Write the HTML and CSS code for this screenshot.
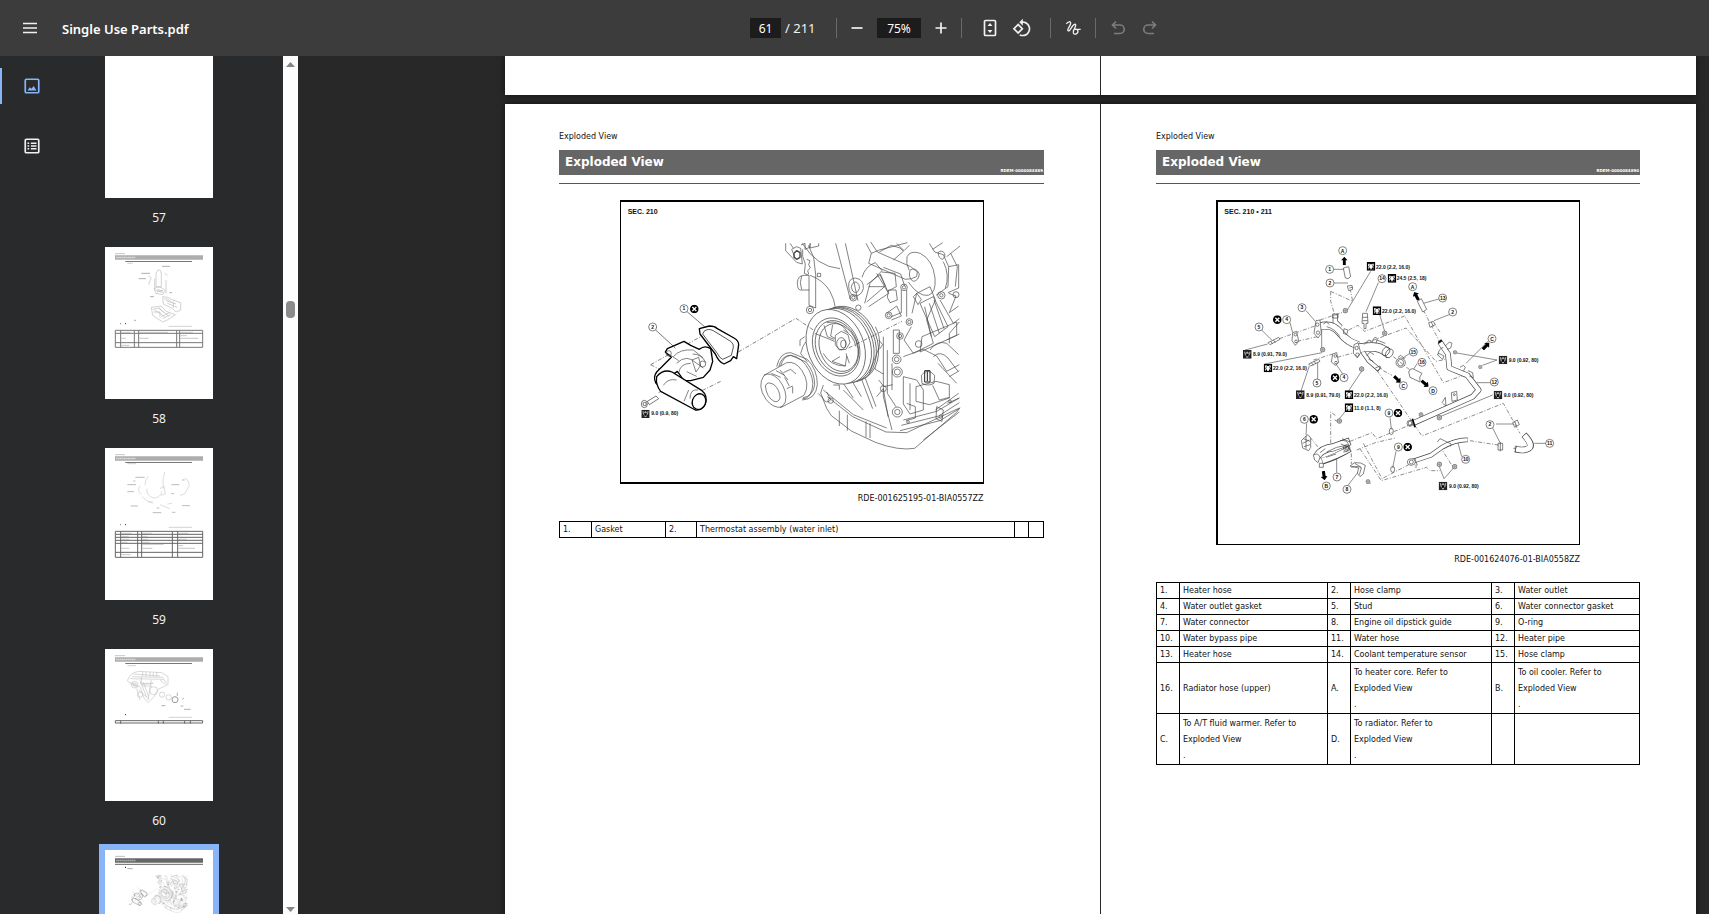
FILE: index.html
```html
<!DOCTYPE html>
<html lang="en">
<head>
<meta charset="utf-8">
<title>Single Use Parts.pdf</title>
<link rel="stylesheet" href="styles.css">
</head>
<body>
<svg class="defs" aria-hidden="true">
  <defs>
    <symbol id="noreuse" viewBox="0 0 26 26">
      <circle cx="13" cy="13" r="13" fill="#000"/>
      <path d="M7 7 19 19M19 7 7 19" stroke="#fff" stroke-width="4"/>
    </symbol>
    <symbol id="torque" viewBox="0 0 26 26">
      <path d="M0 0H26V26H0Z" fill="#000"/>
      <path d="M5 5h4v3q-5 5-1 10l-3 4h5l1-3h4l1 3h5l-3-4q4-5-1-10V5h4v6l-2 3 2 4-4 4H8l-4-4 2-4-2-3Z" fill="#fff"/>
      <path d="M9 7h8v4l2 3-3 5h-6l-3-5 2-3Z" fill="#fff"/>
    </symbol>
    <symbol id="torque-dark" viewBox="0 0 26 26">
      <path d="M0 0H26V26H0Z" fill="#222"/>
      <path d="M3 5h4l1 6 3-6h4l3 6 1-6h4l-3 10-4 3v5h-6v-5l-4-3Z" fill="#aaa"/>
      <path d="M8 11h10l-3 8h-4Z" fill="#000"/>
    </symbol>
    <symbol id="flow" viewBox="0 0 22 30">
      <path d="M11 0 22 12H16V30H6V12H0Z" fill="#000"/>
    </symbol>
    <symbol id="nut" viewBox="0 0 18 18">
      <circle cx="9" cy="9" r="7" fill="#ccc" stroke="#555" stroke-width="2"/>
      <path d="M4 9h10M9 4v10" stroke="#555" stroke-width="1"/>
    </symbol>
    <symbol id="engine" viewBox="33 36 1086 840">
      <g fill="none" stroke="#444" stroke-width="2" stroke-linejoin="round">
        <path d="M527 160V182L560 217 577 222 572 175 560 170 545 178 556 205M540 160l10 14M573 165l12-5v18l14-6 2-12M600 160v14l26-6V160"/>
        <path d="M552 190l8-8 10 6v14l-10 6-8-6Z" stroke-width="4"/>
        <path d="M578 178q-4 20 8 44l-3 28 14 6v90l20 8v-100l-6-52-16-36M590 208l10 4-4 12 5 10-8 8 3 10M598 300H570q-8-2-8-22 2-22 20-22h14M575 258q-8 20 0 40"/>
        <path d="M577 160Q620 230 690 236M677 160l44 168M706 160l38 172M600 256q40 14 60 48 14 26 16 50M622 250h10v10h-10ZM716 290q-2-24 20-26 26 4 24 32-6 22-26 22-16-4-18-28ZM724 292q2-16 14-16 12 6 10 20-4 12-12 12-10-2-12-16Z"/>
        <circle cx="600" cy="360" r="11"/><circle cx="600" cy="360" r="5"/><circle cx="730" cy="323" r="10"/><circle cx="730" cy="323" r="5"/><circle cx="745" cy="353" r="8"/>
        <path d="M768 160l16 30-8 30 110 48q20 0 34-8l2-14-20-16-100-44-20-30M784 190l24-10 84-22M808 186l36-20 26 8 10 10-30 26M860 160l22 22 16-16"/>
        <path d="M897 240q-10-20-6-40 10-20 40-10 38 20 44 74 4 44-20 52-30 4-60-40M900 240q18-10 28 12-2 20-18 22-16-8-10-34Z"/>
        <path d="M958 160l16 26 26 8 16 36-2 60-36 26M968 178l30-20M984 188q10-10 20 2 4 10-6 18-12-2-14-20ZM1010 200l40-32M1016 230l30-6v70l-32 14M1022 190l20 40-6 60M1000 215q20 40 6 80"/>
        <path d="M756 262q10-34 40-44l20 24-36 38-16 60M770 284l40-30 16 34-56 48M776 290l46 0M800 250l36 60-60 40M815 246l40 4 4 40-26 14-22-52M836 300h22l4 30-22 8-8-16ZM820 232l52 20 12 36"/>
        <circle cx="882" cy="292" r="10"/><circle cx="882" cy="292" r="5"/><circle cx="898" cy="396" r="10"/><circle cx="898" cy="396" r="5"/><circle cx="870" cy="438" r="10"/><circle cx="870" cy="438" r="5"/><circle cx="836" cy="376" r="10"/><circle cx="836" cy="376" r="5"/><circle cx="926" cy="462" r="10"/><circle cx="860" cy="508" r="13"/><circle cx="860" cy="508" r="7"/><circle cx="862" cy="546" r="15"/><circle cx="862" cy="546" r="9"/><circle cx="862" cy="666" r="15"/><circle cx="862" cy="666" r="8"/><circle cx="820" cy="596" r="9"/><circle cx="994" cy="316" r="11"/><circle cx="994" cy="316" r="5"/><circle cx="1038" cy="314" r="9"/>
        <path d="M874 300v68l-30 12M890 300v80M910 320l10-10 14 18-10 16ZM830 370l30-22 14 30-30 12M850 420h18v70h-18ZM904 410l-22 40 28 40 60-30-20-70 26-60-16-40-40 20-14 60M930 340l40-20 44 90-40 30ZM944 350l20 90M958 340l30 90M972 330l30 86M1016 310l22 8-20 50 28-20M990 330l40 70 18-14M936 440l104-44v40l-110 50ZM880 500l60-22 40 20 30 46 38-20M960 480q20-30 50-20l36 34M970 500q20-20 44 4l30 40M984 520l56 60M1048 396l-30 34v30M1010 450l38-18"/>
        <path d="M820 440v180l26 100M832 480v130l26 40M846 520v80M880 560l40 10 20 30v60l-40 12-20-30ZM900 580v80M918 590l60-16 40 10v40l-60 20-40-10ZM934 556q18-24 40 0l-2 24q-18 10-36 0ZM968 586l20 44 30-8M1018 560l30-18M1012 640l36-16M976 660l70-50M880 690l100-26 68-40M874 706l112-28 62-40M870 722l120-30 58-36M980 650l20 10-4 34-18-8ZM890 640l26 10v34l-28 8M806 570l16 20 26-6M800 620l20-24 14 84M786 488l10 50 24 14"/>
        <path d="M944 542h16v34h-16ZM952 544v30" stroke="#222" stroke-width="3"/>
        <path d="M588 455q-10 10-16 36l20 24M584 440l-14 10v18M640 585l-8 24 18 46 14 22 60 46 72 34q70 26 118 18l126-108 10-14M652 620l76 60 100 46 62 2 158-74M640 600l90 74 100 40M688 662v46M712 674v48M768 694v48M780 700v44M700 580l30 44M724 570l30 50M754 566l34 90M764 560l34 90M700 600l60 60M650 606l12 24q-14 14-24-6l-14-14M670 585h18v14M940 750l108-84"/>
        <circle cx="662" cy="632" r="8"/><circle cx="894" cy="696" r="4"/><circle cx="1020" cy="634" r="4"/><circle cx="992" cy="680" r="5"/>
        <path d="M500 530q10-44 42-42l50 20q30 30 30 76-4 44-46 46M506 532q8-36 36-36l46 20q26 30 26 68-4 34-36 40M512 528q8-30 30-32 34 4 56 46 20 40 2 72-10 14-22 12"/>
        <path fill="#fff" d="M462 556 530 518q26-6 46 24 26 40 6 74l-68 36q-26 2-46-24-28-40-6-72Z"/>
        <path d="M462 556q18-12 44 12 28 36 20 68-6 14-16 16M466 588q6-16 26-4 18 16 18 40-4 14-18 10-22-12-26-46ZM484 550l28 12M498 542l26 14M510 540l24 30M524 562l14 26M530 596l18-8M548 610v-20M520 548l22-10 16 14"/>
        <g fill="#fff" transform="rotate(-22 690 462)">
          <ellipse cx="712" cy="470" rx="88" ry="116"/><ellipse cx="705" cy="470" rx="88" ry="116"/><ellipse cx="698" cy="469" rx="88" ry="116"/><ellipse cx="690" cy="468" rx="88" ry="116"/><ellipse cx="675" cy="465" rx="84" ry="116"/>
          <ellipse cx="676" cy="466" rx="68" ry="90"/><ellipse cx="678" cy="467" rx="62" ry="82"/><ellipse cx="682" cy="470" rx="56" ry="74"/>
        </g>
        <path d="M642 406l10 34 20 8M668 404l-6 34 14 8M614 430l60 24M690 500l-24 14 40 14 4-30M708 490l10 30M640 490q20 38 66 38M700 420q30 14 38 50M650 398q40-10 64 30M676 436l18-12 20 10 6 24-12 20-20 2-12-16Z"/>
        <ellipse cx="694" cy="461" rx="14" ry="18"/><ellipse cx="700" cy="462" rx="8" ry="12"/>
        <path d="M796 410q16 30 12 60l-30 80M806 450l12 14-10 14"/>
        <path stroke-dasharray="12 5 3 5" d="M385 486 558 385 610 420M716 474l160-80M122 524l150-84M122 524l150 80 60-30M146 608l160-92M180 560l180-96"/>
      </g>
      <g fill="#fff" stroke="#000" stroke-width="4" stroke-linejoin="round">
        <path d="M268 416 298 408q16 0 24 8l50 28q14 8 14 20l-6 42-10-6-8 12-20 10q-16-6-26-30l-46-60Z"/>
        <path fill="none" stroke-width="2" d="M282 424q12-10 28-2l52 32q10 8 8 18l-6 24-26 12q-10-4-16-18l-44-58Z"/>
        <path d="M166 486 172 476 222 454 242 466 268 478q16-14 34-2l6 38-8 26-20 22-38 10-20 0-20-28-20 14 12 46-30-4-26-20q-10-18 2-34l44-44Z"/>
        <path d="M140 560q20-24 46-14l90 56q18 14 10 40-10 20-30 18l-104-56q-16-20-12-44Z"/>
        <ellipse cx="267" cy="635" rx="20" ry="24" transform="rotate(20 267 635)"/>
        <g fill="none" stroke="#444" stroke-width="2"><path d="M190 500q20-24 60-20l30 24M200 520q30-30 60 0l20 14M176 492l30 20M246 510l20-8 6 24-14 20ZM206 550q4-30 36-30M236 600l-14 34M200 570q-26-6-40 16M230 545l30 14M248 492q26 0 40 26M240 626q0-30 24-26"/><circle cx="176" cy="490" r="8"/><circle cx="278" cy="522" r="9"/></g>
      </g>
      <g fill="#fff" stroke="#333" stroke-width="2"><path d="M112 634l26-16 8 8-28 18Z"/><ellipse cx="103" cy="642" rx="9" ry="11"/><circle cx="104" cy="642" r="5"/><path fill="none" d="M137 420 196 474M230 364 286 412"/></g>
    </symbol>
  </defs>
</svg>

<header class="toolbar">
  <div class="toolbar-start">
    <button class="icon-button" aria-label="Menu"><svg viewBox="0 0 20 20" fill="none" stroke="#f1f1f1" stroke-width="1.700"><path d="M3 5.500h14M3 10h14M3 14.500h14"/></svg></button>
    <h1 class="doc-title">Single Use Parts.pdf</h1>
  </div>
  <div class="toolbar-tools">
    <input class="tool-input page-input" aria-label="Page number" value="61">
    <span class="page-total">/ 211</span>
    <span class="divider"></span>
    <button class="icon-button" aria-label="Zoom out"><svg viewBox="0 0 20 20" stroke="#f1f1f1" stroke-width="1.700"><path d="M4.500 10h11"/></svg></button>
    <input class="tool-input zoom-input" aria-label="Zoom level" value="75%">
    <button class="icon-button" aria-label="Zoom in"><svg viewBox="0 0 20 20" stroke="#f1f1f1" stroke-width="1.700"><path d="M4.500 10h11M10 4.500v11"/></svg></button>
    <span class="divider divider-end"></span>
    <button class="icon-button" aria-label="Fit to page"><svg viewBox="0 0 20 20"><rect x="4.500" y="2.500" width="11" height="15" rx="1" fill="none" stroke="#f1f1f1" stroke-width="1.700"/><path d="M10 5 12.500 8h-5ZM10 15l2.500-3h-5Z" fill="#f1f1f1"/></svg></button>
    <button class="icon-button spaced" aria-label="Rotate"><svg viewBox="0 0 24 24"><path fill="#f1f1f1" d="M7.340 6.410L.86 12.900l6.490 6.480 6.490-6.480-6.500-6.490zM3.690 12.900l3.660-3.660L11 12.900l-3.660 3.660-3.650-3.660zm15.670-6.260C17.610 4.880 15.300 4 13 4V.76L8.760 5 13 9.240V6c1.790 0 3.580.68 4.950 2.050 2.730 2.730 2.730 7.170 0 9.900C16.580 19.320 14.790 20 13 20c-.97 0-1.940-.21-2.840-.61l-1.490 1.490C10.020 21.620 11.510 22 13 22c2.300 0 4.610-.88 6.360-2.640 3.520-3.510 3.520-9.210 0-12.720z"/></svg></button>
    <span class="divider divider-wide"></span>
    <button class="icon-button" aria-label="Draw"><svg viewBox="998 54 60 60" fill="none" stroke="#f1f1f1" stroke-width="4"><path d="M1008 72C1013 64 1021 63 1021 70C1021 78 1009 87 1013 92C1018 98 1027 70 1035 73C1041 77 1026 91 1029 99C1033 107 1044 100 1043 93C1041 85 1032 86 1028 92M1034 88H1051"/></svg></button>
    <span class="divider divider-narrow"></span>
    <button class="icon-button" aria-label="Undo" disabled><svg viewBox="0 0 20 20" fill="none" stroke="#7c7c7c" stroke-width="1.700"><path d="M8 3.500 4.500 7 8 10.500M5 7h7a4 4 0 0 1 0 8.500H6"/></svg></button>
    <button class="icon-button spaced" aria-label="Redo" disabled><svg viewBox="0 0 20 20" fill="none" stroke="#7c7c7c" stroke-width="1.700"><path d="M12 3.500 15.500 7 12 10.500M15 7H8a4 4 0 0 0 0 8.500h6"/></svg></button>
  </div>
</header>

<div class="workspace">
  <nav class="rail">
    <button class="rail-button active" aria-label="Thumbnails"><svg viewBox="0 0 16 16"><rect x="2" y="2" width="12" height="12" rx="1" fill="none" stroke="#8ab4f8" stroke-width="1.500"/><path d="M4 12 6 9l1.500 1.500L9.500 8l2.500 4Z" fill="#8ab4f8"/></svg></button>
    <button class="rail-button" aria-label="Document outline"><svg viewBox="0 0 16 16"><rect x="2" y="2" width="12" height="12" rx="1" fill="none" stroke="#f1f1f1" stroke-width="1.500"/><path d="M4 5.500h1.500M7 5.500h5M4 8h1.500M7 8h5M4 10.500h1.500M7 10.500h5" stroke="#f1f1f1" stroke-width="1.300"/></svg></button>
  </nav>

  <aside class="thumbs">
    <figure class="thumb first">
      <div class="sheet"></div>
      <figcaption>57</figcaption>
    </figure>
    <figure class="thumb">
      <svg class="sheet" viewBox="75 51 324 456" fill="none">
        <path d="M105 71h30" stroke="#aaa" stroke-width="2"/>
        <path d="M105 82.500h264" stroke="#adadad" stroke-width="14"/><path d="M108 82.500h58" stroke="#d8d8d8" stroke-width="4" stroke-dasharray="5 1"/><path d="M136 94.500h200" stroke="#777" stroke-width="3"/><path d="M142 100h16" stroke="#bbb" stroke-width="2"/>
        <g stroke="#bbb" stroke-width="2"><path d="M246 109h24M184 130h26M176 146h22M210 200h12M268 188h8M162 271h6" stroke="#888"/><path d="M234 120q10-2 10 12v38h-16V130ZM206 138q12 4 4 14l-4 12M224 146v34M254 130l8 6M258 150v40M222 176q16-12 34 6l-8 12-20-4ZM226 180l24 8M232 178l16 6M230 186l20-6M248 200q18 0 26 8l28 10v22l-14 6-10-10-28-14ZM252 206q14 0 22 10M258 212l30 10M262 220l30 12M280 214v20M214 232l30-4 14 16 28 10-24 16-14 6-30-20ZM218 238l20-4 12 14M224 240l30 20M236 234l30 24M244 260l24-12M248 266l24-12M220 246h20v16"/></g>
        <path d="M121 281h2M135 281h3" stroke="#333" stroke-width="3"/><path d="M266 289h70" stroke="#bbb" stroke-width="2"/>
        <path d="M106 301H368V352H106ZM106 310H368M106 338H368M122 301V352M163 301V352M176 301V352M290 301V352M299 301V352" stroke="#777" stroke-width="3"/>
        <path d="M124 307h28M178 307h86M301 307h38M124 325h14M178 325h28M301 317h20M301 325h54M124 346h24" stroke="#aaa" stroke-width="2"/>
      </svg>
      <figcaption>58</figcaption>
    </figure>
    <figure class="thumb">
      <svg class="sheet" viewBox="75 654 324 456" fill="none">
        <path d="M105 674h30" stroke="#aaa" stroke-width="2"/>
        <path d="M105 685.500h264" stroke="#adadad" stroke-width="14"/><path d="M108 685.500h58" stroke="#d8d8d8" stroke-width="4" stroke-dasharray="5 1"/><path d="M136 697.500h200" stroke="#777" stroke-width="3"/><path d="M142 701h26" stroke="#bbb" stroke-width="2"/>
        <g stroke="#ccc" stroke-width="2"><path d="M166 742h28M160 753h6M142 764h26M142 785h20M306 750h8M274 764h24M274 791h8M152 828h22M306 827h24M218 848h26M230 834h8M276 847h10" stroke="#999"/><path d="M205 738q-10 10-10 28M180 768q-10 14 4 26M200 776q0 24 22 28 18 0 24-20M254 726q-8 20-4 50M240 776l12-8 4 24-14 4M186 800l14 12 20 8M204 816h14M240 824l30 12M262 822l14-2M300 796l14-4 14-26-4-14-10-8"/></g>
        <path d="M121 884h2M135 884h3" stroke="#333" stroke-width="3"/><path d="M266 892h70" stroke="#bbb" stroke-width="2"/>
        <path d="M106 904H368V982H106ZM106 913H368M106 922H368M106 931H368M106 940H368M106 967H368M122 904V982M173 904V982M185 904V982M277 904V982M293 904V982" stroke="#666" stroke-width="3"/>
        <path d="M124 910h30M187 910h28M295 910h30M124 919h22M187 919h16M124 928h24M187 928h18M295 928h26M124 937h18M187 937h22M187 943h64M187 955h30M124 955h24M295 947h14M295 955h50M124 974h28" stroke="#aaa" stroke-width="2"/>
      </svg>
      <figcaption>59</figcaption>
    </figure>
    <figure class="thumb">
      <svg class="sheet" viewBox="75 207 324 456" fill="none">
        <path d="M105 227h30" stroke="#aaa" stroke-width="2"/>
        <path d="M105 238.500h264" stroke="#adadad" stroke-width="14"/><path d="M108 238.500h58" stroke="#d8d8d8" stroke-width="4" stroke-dasharray="5 1"/><path d="M136 250.500h200" stroke="#777" stroke-width="3"/><path d="M142 257h26" stroke="#bbb" stroke-width="2"/>
        <g stroke="#c4c4c4" stroke-width="2"><path d="M142 302q8-24 34-28l70 4 18 12v24l-30 14-12 22-18 18-12-14-12-34-34-14ZM160 282l80 6M150 296l100 2M156 290l92 2M180 302l20 50M190 306l16 44M184 290v24l36-4M214 300l-10 60M152 310l20 10M170 326l10 34M176 330l30 26M240 300l16 14M248 292l12 20M188 276v12M198 276v14M210 276v14M220 278v12M230 276v14M180 310h40M186 318h30"/><circle cx="221" cy="332" r="12"/><circle cx="164" cy="314" r="10"/><circle cx="164" cy="314" r="5"/><circle cx="180" cy="344" r="8"/><circle cx="246" cy="344" r="8"/><circle cx="266" cy="352" r="8"/><circle cx="285" cy="359" r="9" stroke="#999" stroke-width="3"/><path d="M244 377h12M306 358l6-4M302 378h8M312 388h20M292 348v-10" stroke="#888"/></g>
        <path d="M135 404h3" stroke="#333" stroke-width="3"/><path d="M266 412h70" stroke="#bbb" stroke-width="2"/>
        <path d="M106 422H368V429H106ZM122 422V431M235 422V431M250 422V431M314 422V431M331 422V431" stroke="#666" stroke-width="3"/>
      </svg>
      <figcaption>60</figcaption>
    </figure>
    <figure class="thumb selected">
      <svg class="sheet" viewBox="75 810 324 456" fill="none">
        <path d="M105 829h30" stroke="#999" stroke-width="2"/>
        <path d="M105 841.500h264" stroke="#666" stroke-width="14"/><path d="M108 841.500h58" stroke="#aaa" stroke-width="4" stroke-dasharray="5 1"/><path d="M105 853h264" stroke="#666" stroke-width="3"/><path d="M135 862h3" stroke="#000" stroke-width="3"/><path d="M142 866h16" stroke="#888" stroke-width="2"/>
        <use href="#engine" x="137" y="862" width="198" height="154"/>
      </svg>
    </figure>
  </aside>

  <div class="scrollbar" aria-hidden="true">
    <svg viewBox="0 0 9 5"><path d="M4.500 0 9 5H0Z"/></svg>
    <span class="scroll-grip"></span>
    <svg viewBox="0 0 9 5"><path d="M0 0H9L4.500 5Z"/></svg>
  </div>

  <main class="viewer">
    <div class="spread spread-end"><div class="page"></div><div class="page"></div></div>
    <div class="spread">
      <article class="page">
        <p class="running-head">Exploded View</p>
        <header class="banner"><h2>Exploded View</h2><small>RDEM-0000084889</small></header>
        <hr>
        <figure class="plate plate-a">
          <svg viewBox="33 36 1086 840" class="drawing">
            <use href="#engine" x="33" y="36" width="1086" height="840"/>
            <g fill="#fff" stroke="#444" stroke-width="2"><circle cx="222" cy="356" r="12"/><circle cx="128" cy="411" r="12"/></g>
            <use href="#noreuse" x="240" y="344" width="26" height="26"/>
            <use href="#torque-dark" x="94" y="659" width="25" height="25"/>
            <g class="labels"><text class="sec" x="53" y="72">SEC. 210</text><text x="124" y="676">9.0 (0.9, 80)</text><g class="nums"><text x="222" y="361">1</text><text x="128" y="416">2</text></g></g>
          </svg>
          <figcaption>RDE-001625195-01-BIA0557ZZ</figcaption>
        </figure>
        <table class="parts">
          <colgroup><col class="w32"><col class="w74"><col class="w31"><col><col class="w14"><col class="w15"></colgroup>
          <tr><td>1.</td><td>Gasket</td><td>2.</td><td>Thermostat assembly (water inlet)</td><td></td><td></td></tr>
        </table>
      </article>
      <article class="page">
        <p class="running-head">Exploded View</p>
        <header class="banner"><h2>Exploded View</h2><small>RDEM-0000084890</small></header>
        <hr>
        <figure class="plate plate-b">
          <svg viewBox="24 -84 1083 1026" class="drawing">
            <g fill="none" stroke="#555" stroke-width="2">
              <path d="M370 118h32M372 159h42M482 124 412 240M505 158 468 245M288 242l28 32M240 278l8 30M155 300l30 30M105 360l68-18M164 402l172-34M508 250l16 54M335 300v54M272 486l26-78M323 448v-54M398 432l-20-30M416 482l40-60M600 370l-22 14M622 400l-14 22"/>
              <path d="M640 220l50-14M672 272l50-20M735 368l126 22-44 16M800 458l48 0M848 495 690 560M416 532l-28 34M290 580l-2 36M380 728v-44M414 766l32-42M540 562l4 36M558 664l-10 50M755 680l-12-46M973 640h50M858 582h52M848 594l22 44M702 746l-14-36M702 746l32-36M838 330l-70 70"/>
              <g stroke-dasharray="12 5 3 5"><path d="M362 184l66 30-10-50M362 184v30l12 40M208 326l112-40M262 334l60-14M330 270l76-26M416 300l28-14 20 18 120-46L700 458l60-22M464 340l124-46 90 100 30-6M310 390l72-22M382 382l50-14M550 380l50 40M520 422l26 14M500 420 636 618 880 520l50 90M362 640v-94l14 10M300 622l30 36M420 634l66-26 14 18 112-46M440 660l56-22 60-14M460 640l56 106 80-42M450 656l64 96 136-40 10 10 30 0M424 670v32M640 240l50 98M690 306l-18-26M780 632l90 14M910 655h26M690 650l42 66"/></g>
            </g>
            <g fill="#fff" stroke="#444" stroke-width="2" stroke-linejoin="round">
              <path d="M400 114l16-4 6 30q-8 10-16 4ZM412 168l14-2 2 12-12 4ZM418 174l10-2M248 308l12-4 6 30-10 12-10-14ZM368 372l12-4 6 30-10 8-12-10ZM174 338l32-16 4 6-30 16ZM182 334l6 8M190 330l6 8M296 402l30-14 4 6-28 14ZM304 398l6 8M312 394l6 8"/>
              <circle cx="256" cy="314" r="4"/><circle cx="258" cy="334" r="4"/><circle cx="376" cy="378" r="4"/><circle cx="378" cy="398" r="4"/>
              <path d="M458 250h14l2 30h-6v16h-6v-16h-6ZM458 262h15M458 272h15"/>
            </g>
            <g fill="none" stroke-linejoin="round">
              <path d="M376 254V276L392 292" stroke="#444" stroke-width="16"/><path d="M376 256V276L392 292" stroke="#fff" stroke-width="12"/>
              <path d="M328 290Q366 278 390 308T446 346" stroke="#444" stroke-width="24"/><path d="M328 290Q366 278 390 308T446 346" stroke="#fff" stroke-width="20"/>
              <path d="M440 356Q480 348 500 352T540 374" stroke="#444" stroke-width="28"/><path d="M440 356Q480 348 500 352T538 373" stroke="#fff" stroke-width="24"/>
              <path d="M458 366 476 392 508 420" stroke="#444" stroke-width="14"/><path d="M458 366 476 392 506 418" stroke="#fff" stroke-width="10"/>
              <path d="M690 336 714 372 718 414 772 436 806 480 788 500 608 580" stroke="#444" stroke-width="17"/><path d="M691 338 714 372 718 414 772 436 806 480 788 500 608 580" stroke="#fff" stroke-width="13"/>
              <path d="M608 694 662 676 696 652Q740 628 774 630" stroke="#444" stroke-width="14"/><path d="M608 694 662 676 696 652Q740 628 773 630" stroke="#fff" stroke-width="10"/>
              <path d="M942 614Q972 646 956 655T916 657" stroke="#444" stroke-width="20"/><path d="M943 616Q970 646 956 655T918 657" stroke="#fff" stroke-width="16"/>
              <path d="M320 680Q334 656 370 652L420 634" stroke="#444" stroke-width="24"/><path d="M321 678Q334 656 370 652L418 635" stroke="#fff" stroke-width="20"/>
              <path d="M336 694Q372 684 420 656" stroke="#444" stroke-width="20"/><path d="M337 692Q372 682 418 657" stroke="#fff" stroke-width="16"/>
            </g>
            <g fill="none" stroke="#444" stroke-width="2" stroke-linejoin="round">
              <path fill="#fff" d="M318 272l12-2 4 40-10 14-12-14ZM432 344l12-6 8 30-10 16-12-14Z"/><circle cx="322" cy="284" r="5"/><circle cx="324" cy="308" r="5"/><circle cx="440" cy="354" r="5"/><circle cx="442" cy="374" r="5"/>
              <path d="M368 252h16v12h-16ZM340 282l10-6 8 8M350 290q24 6 40 30M402 296l12 4-4 14-10-4ZM462 344l14-14 14 6M488 332q6-16 14-6l-4 14M500 330l26 10M470 378l10-12 12 8M476 388l14 6M496 414l14-6 4 10"/>
              <ellipse cx="538" cy="370" rx="10" ry="14" fill="#fff" transform="rotate(30 538 370)"/><ellipse cx="528" cy="364" rx="10" ry="14" transform="rotate(30 528 364)"/>
              <ellipse cx="572" cy="398" rx="14" ry="14"/><ellipse cx="572" cy="398" rx="9" ry="10"/><path d="M564 382l8-6 10 8M580 388l6-6"/>
              <path fill="#fff" d="M596 426q2-10 12-10l28 14q-10 10-6 26l-30-14ZM622 214l12-8 16 32-12 8ZM656 278l14-4 6 10-16 8ZM664 276l6 14"/>
              <path d="M685 338l10-8" stroke="#000" stroke-width="5"/><path d="M706 348l12-12 8 4-4 14-10 4M684 374q2-18 16-22M682 374l16 14 4-10-16-8Z"/><path d="M750 412l10-6 6 6-6 12M774 422l14 6 2 16-12-6"/>
              <path fill="#fff" d="M724 488l16-4 2 26-16 4Z"/><circle cx="733" cy="494" r="3"/><path d="M696 518l10-16 2 26-10-8"/>
              <path d="M607 566l8 26" stroke="#000" stroke-width="5"/><ellipse cx="600" cy="580" rx="9" ry="9"/><ellipse cx="600" cy="580" rx="5" ry="7"/><ellipse cx="604" cy="696" rx="12" ry="10" fill="#fff"/><ellipse cx="604" cy="696" rx="6" ry="6"/><path d="M614 684l8 22M682 636l8-10 34 16-4 8M618 704v10"/>
              <path d="M908 578l14-8 6 14-14 8ZM914 574l6 14M864 640h14v20h-14ZM871 636v28M916 647v20"/>
              <path fill="#fff" d="M284 622l10-8 8 10v28l-6 10-18-8-4-22Z"/><path d="M280 626l20 8M278 640l20-10M282 650l18-6M288 618v38"/>
              <path fill="#fff" d="M310 676q14-10 20 6l-6 16-10-8ZM328 700h12v12h-12Z"/><path d="M330 668l16-12M350 666q30-18 60-20M348 682l30-10M390 632q20-4 26 12l-10 14M392 642l20 8M396 626l24 10M400 666q16 0 16-14"/><circle cx="410" cy="654" r="10"/><circle cx="410" cy="654" r="5"/>
              <path fill="#fff" d="M420 708l14-10q20-2 32 8l-6 26-10 8-8-10 4-16Z"/><path d="M424 712q20-6 30 2l-6 20M434 700l20 12"/>
              <ellipse cx="544" cy="604" rx="6" ry="10"/><ellipse cx="548" cy="718" rx="6" ry="9"/>
              <path d="M374 570l18 8M472 752l10 8"/>
            </g>
            <use href="#nut" x="397" y="233" width="18" height="18"/><use href="#nut" x="329" y="350" width="18" height="18"/><use href="#nut" x="515" y="301" width="18" height="18"/><use href="#nut" x="446" y="408" width="18" height="18"/><use href="#nut" x="379" y="564" width="18" height="18"/><use href="#nut" x="466" y="747" width="16" height="16"/><use href="#nut" x="625" y="546" width="16" height="16"/><use href="#nut" x="679" y="554" width="18" height="18"/><use href="#nut" x="679" y="694" width="18" height="18"/><use href="#nut" x="725" y="701" width="18" height="18"/><use href="#nut" x="728" y="360" width="14" height="14"/><use href="#nut" x="804" y="404" width="14" height="14"/>
            <use href="#flow" x="392" y="80" width="22" height="26"/>
            <use href="#flow" x="608" y="184" width="22" height="28" transform="rotate(-28 619 198)"/>
            <use href="#flow" x="817" y="334" width="22" height="28" transform="rotate(45 828 348)"/>
            <use href="#flow" x="551" y="434" width="22" height="28" transform="rotate(135 562 448)"/>
            <use href="#flow" x="634" y="447" width="22" height="28" transform="rotate(130 645 461)"/>
            <use href="#flow" x="331" y="723" width="22" height="28" transform="rotate(172 342 737)"/>
            <use href="#torque" x="470" y="96" width="26" height="26"/><use href="#torque" x="533" y="132" width="26" height="26"/><use href="#torque" x="488" y="229" width="26" height="26"/><use href="#torque" x="161" y="401" width="26" height="26"/><use href="#torque" x="404" y="481" width="26" height="26"/><use href="#torque" x="404" y="520" width="26" height="26"/>
            <use href="#torque-dark" x="99" y="360" width="26" height="26"/><use href="#torque-dark" x="258" y="481" width="26" height="26"/><use href="#torque-dark" x="866" y="377" width="26" height="26"/><use href="#torque-dark" x="851" y="482" width="26" height="26"/><use href="#torque-dark" x="686" y="755" width="26" height="26"/>
            <use href="#noreuse" x="189" y="256" width="26" height="26"/><use href="#noreuse" x="362" y="430" width="26" height="26"/><use href="#noreuse" x="298" y="555" width="26" height="26"/><use href="#noreuse" x="551" y="536" width="26" height="26"/><use href="#noreuse" x="580" y="638" width="26" height="26"/>
            <g fill="#fff" stroke="#444" stroke-width="2">
              <circle cx="398" cy="62" r="12"/><circle cx="359" cy="118" r="12"/><circle cx="360" cy="159" r="12"/><circle cx="516" cy="146" r="12"/><circle cx="608" cy="170" r="12"/><circle cx="276" cy="233" r="12"/><circle cx="230" cy="269" r="12"/><circle cx="147" cy="291" r="12"/><circle cx="321" cy="459" r="12"/><circle cx="402" cy="443" r="12"/><circle cx="610" cy="366" r="12"/><circle cx="636" cy="397" r="12"/><circle cx="580" cy="467" r="12"/><circle cx="669" cy="482" r="12"/><circle cx="698" cy="204" r="12"/><circle cx="728" cy="246" r="12"/><circle cx="846" cy="326" r="12"/><circle cx="853" cy="456" r="12"/><circle cx="840" cy="584" r="12"/><circle cx="1019" cy="640" r="12"/><circle cx="767" cy="688" r="12"/><circle cx="283" cy="568" r="12"/><circle cx="537" cy="549" r="12"/><circle cx="565" cy="651" r="12"/><circle cx="381" cy="741" r="12"/><circle cx="349" cy="768" r="12"/><circle cx="411" cy="778" r="12"/>
            </g>
            <g class="labels">
              <text class="sec" x="43" y="-48">SEC. 210 • 211</text>
              <text x="498" y="116">22.0 (2.2, 16.0)</text><text x="560" y="151">24.5 (2.5, 18)</text><text x="516" y="248">22.0 (2.2, 16.0)</text><text x="129" y="378">8.9 (0.91, 79.0)</text><text x="189" y="420">22.0 (2.2, 16.0)</text><text x="289" y="500">8.9 (0.91, 79.0)</text><text x="432" y="500">22.0 (2.2, 16.0)</text><text x="432" y="539">11.0 (1.1, 8)</text><text x="896" y="395">9.0 (0.92, 80)</text><text x="881" y="500">9.0 (0.92, 80)</text><text x="717" y="773">9.0 (0.92, 80)</text>
              <g class="nums"><text x="398" y="68">A</text><text x="359" y="123">1</text><text x="360" y="164">2</text><text x="516" y="151">14</text><text x="608" y="176">A</text><text x="276" y="238">3</text><text x="230" y="274">4</text><text x="147" y="296">5</text><text x="321" y="464">5</text><text x="402" y="448">4</text><text x="610" y="371">15</text><text x="636" y="402">16</text><text x="580" y="473">C</text><text x="669" y="488">D</text><text x="698" y="209">13</text><text x="728" y="251">2</text><text x="846" y="332">C</text><text x="853" y="461">12</text><text x="840" y="589">2</text><text x="1019" y="645">11</text><text x="767" y="693">10</text><text x="283" y="573">6</text><text x="537" y="554">9</text><text x="565" y="656">9</text><text x="381" y="746">7</text><text x="349" y="774">B</text><text x="411" y="783">8</text></g>
            </g>
          </svg>
          <figcaption>RDE-001624076-01-BIA0558ZZ</figcaption>
        </figure>
        <table class="parts">
          <colgroup><col class="w23"><col class="w148"><col class="w23"><col class="w141"><col class="w23"><col></colgroup>
          <tr><td>1.</td><td>Heater hose</td><td>2.</td><td>Hose clamp</td><td>3.</td><td>Water outlet</td></tr>
          <tr><td>4.</td><td>Water outlet gasket</td><td>5.</td><td>Stud</td><td>6.</td><td>Water connector gasket</td></tr>
          <tr><td>7.</td><td>Water connector</td><td>8.</td><td>Engine oil dipstick guide</td><td>9.</td><td>O-ring</td></tr>
          <tr><td>10.</td><td>Water bypass pipe</td><td>11.</td><td>Water hose</td><td>12.</td><td>Heater pipe</td></tr>
          <tr><td>13.</td><td>Heater hose</td><td>14.</td><td>Coolant temperature sensor</td><td>15.</td><td>Hose clamp</td></tr>
          <tr class="tall"><td>16.</td><td>Radiator hose (upper)</td><td>A.</td><td>To heater core. Refer to<br>Exploded View<br>.</td><td>B.</td><td>To oil cooler. Refer to<br>Exploded View<br>.</td></tr>
          <tr class="tall"><td>C.</td><td>To A/T fluid warmer. Refer to<br>Exploded View<br>.</td><td>D.</td><td>To radiator. Refer to<br>Exploded View<br>.</td><td></td><td></td></tr>
        </table>
      </article>
    </div>
  </main>
</div>
</body>
</html>
```

FILE: styles.css
```css
* { box-sizing: border-box; }
body {
  margin: 0;
  height: 100vh;
  overflow: hidden;
  display: flex;
  flex-direction: column;
  background: #282828;
  color: #f1f1f1;
  font: 12px/18px "Noto Sans", sans-serif;
}
h1, h2, p, figure { margin: 0; }
button { border: 0; padding: 0; background: none; }
.defs { position: absolute; width: 0; height: 0; }

/* Toolbar */
.toolbar {
  flex: 0 0 56px;
  display: grid;
  grid-template-columns: 750px auto 1fr;
  align-items: center;
  background: #3c3c3c;
}
.toolbar-start { display: flex; align-items: center; gap: 22px; padding-left: 20px; }
.doc-title { padding-top: 2px; font-size: 13px; line-height: 20px; font-weight: 600; color: #fff; }
.toolbar-tools { display: flex; align-items: center; }
.icon-button { width: 20px; height: 20px; flex: none; }
.icon-button svg { display: block; width: 20px; height: 20px; }
.tool-input {
  height: 20px;
  border: 0;
  padding: 0;
  background: #1c1c1c;
  color: #fff;
  text-align: center;
  font: inherit;
}
.page-input { width: 31px; }
.page-total { width: 35px; padding-left: 4px; font-size: 13px; }
.zoom-input { width: 44px; margin: 0 10px; }
.divider { width: 1px; height: 20px; margin: 0 10px 0 20px; background: #6a6a6a; }
.divider-end { margin: 0 18px 0 10px; }
.divider-wide { margin: 0 12px 0 18px; }
.divider-narrow { margin: 0 12px; }
.spaced { margin-left: 12px; }

/* Sidebar */
.workspace { flex: 1; min-height: 0; display: flex; overflow: hidden; }
.rail { width: 64px; padding-top: 12px; background: #282a2b; display: flex; flex-direction: column; gap: 24px; }
.rail-button { height: 36px; border-left: 2px solid transparent; padding-left: 21px; }
.rail-button.active { border-color: #8ab4f8; }
.rail-button svg { display: block; width: 18px; height: 18px; }
.thumbs { width: 219px; overflow: hidden; background: #282a2b; padding-left: 41px; }
.thumb { width: 108px; height: 201px; }
.thumb .sheet { display: block; width: 108px; height: 152px; background: #fff; }
.thumb.first { height: 191px; }
.thumb.first .sheet { height: 142px; }
.thumb figcaption { padding-top: 11px; text-align: center; }
.thumb.selected .sheet { outline: 6px solid #8ab4f8; }
.scrollbar {
  width: 15px;
  padding: 6px 3px 2px;
  display: flex;
  flex-direction: column;
  align-items: center;
  background: #fcfcfc;
}
.scrollbar svg { width: 9px; height: 5px; fill: #858585; }
.scroll-grip { width: 9px; height: 17px; margin: 234px 0 auto; border-radius: 4px; background: #8b8b8b; }

/* Document */
.viewer {
  flex: 1;
  display: flex;
  flex-direction: column;
  align-items: flex-end;
  gap: 9px;
  padding-right: 13px;
  font-family: "DejaVu Sans", sans-serif;
}
.spread { display: flex; gap: 1px; flex: none; box-shadow: 0 0 6px #111; }
.page {
  width: 595px;
  height: 842px;
  padding: 24px 56px 0 54px;
  background: #fff;
  color: #111;
  font-size: 8px;
  line-height: 17px;
}
.page + .page { padding: 24px 56px 0 55px; }
.spread-end .page { height: 39px; }
.running-head { height: 22px; }
.banner {
  display: flex;
  justify-content: space-between;
  align-items: flex-end;
  height: 25px;
  padding: 0 1px 2px 6px;
  background: #666;
  color: #fff;
}
.banner h2 { align-self: center; font-size: 12px; line-height: 20px; }
.banner small { font-size: 4px; line-height: 4px; font-weight: 700; }
hr { height: 1px; margin: 8px 0 16px; border: 0; background: #555; }
.plate { width: 364px; margin: 0 auto; }
.drawing { display: block; width: 100%; border: solid #000; border-width: 2px 1px; }
.plate-b .drawing { border-width: 2px 1px 1px 2px; }
.plate figcaption { margin-top: 6px; text-align: right; line-height: 17px; }
.labels { font-family: "Liberation Sans", sans-serif; font-size: 15px; font-weight: 700; fill: #111; }
.labels .sec { font-size: 21px; }
.nums { text-anchor: middle; }
.parts {
  width: 100%;
  margin-top: 14px;
  table-layout: fixed;
  border-collapse: collapse;
}
.parts td { height: 16px; padding: 1px 3px 0; border: 1px solid #000; line-height: 14px; }
.parts .tall td { height: 51px; padding: 0 3px; line-height: 17px; }
.parts .tall td { line-height: 16px; padding-top: 1px; }
.w14 { width: 14px; }
.w15 { width: 15px; }
.w23 { width: 23px; }
.w31 { width: 31px; }
.w32 { width: 32px; }
.w74 { width: 74px; }
.w141 { width: 141px; }
.w148 { width: 148px; }
```
